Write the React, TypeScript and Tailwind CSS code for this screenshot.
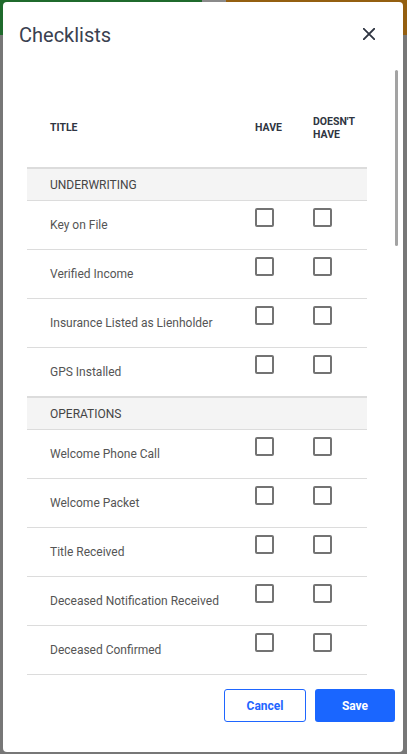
import React from "react";

type Row = { kind: "section"; label: string } | { kind: "item"; label: string };

const rows: Row[] = [
  { kind: "section", label: "UNDERWRITING" },
  { kind: "item", label: "Key on File" },
  { kind: "item", label: "Verified Income" },
  { kind: "item", label: "Insurance Listed as Lienholder" },
  { kind: "item", label: "GPS Installed" },
  { kind: "section", label: "OPERATIONS" },
  { kind: "item", label: "Welcome Phone Call" },
  { kind: "item", label: "Welcome Packet" },
  { kind: "item", label: "Title Received" },
  { kind: "item", label: "Deceased Notification Received" },
  { kind: "item", label: "Deceased Confirmed" },
];

function Box() {
  return <div className="w-[19px] h-[19px] border-2 border-[#737373] rounded-[2px] bg-white" />;
}

export default function App() {
  return (
    <div className="relative w-[407px] h-[754px] bg-[#777777] overflow-hidden font-['Roboto',sans-serif]">
      {/* dimmed background app */}
      <div className="flex h-[35px]">
        <div className="w-[202px] bg-[#1f6a2c]" />
        <div className="w-[24px] bg-[#8a8a8a]" />
        <div className="flex-1 bg-[#945f10]" />
      </div>

      {/* modal */}
      <div className="absolute left-[3px] top-[2px] w-[400px] h-[750px] bg-white rounded-[4px] flex flex-col overflow-hidden">
        <div className="h-[64px] shrink-0 flex items-center justify-between pl-4 pr-[28px]">
          <span className="text-[20px] text-[#3a4150] leading-none pt-[1px]">Checklists</span>
          <svg width="12" height="12" viewBox="0 0 12 12" className="text-[#2f3542]">
            <path d="M0.8 0.8 L11.2 11.2 M11.2 0.8 L0.8 11.2" stroke="currentColor" strokeWidth="1.9" strokeLinecap="square" />
          </svg>
        </div>

        <div className="relative h-[609px] shrink-0 overflow-hidden">
          <div className="absolute right-[5px] top-[4px] w-[3px] h-[176px] rounded-full bg-[#a3a3a3]" />
          <div className="pt-[22px] pl-6 w-[364px]">
            <div className="grid grid-cols-[228px_58px_1fr] h-[80px] items-center border-b border-[#dcdcdc] text-[10.5px] font-bold text-[#2f3542] leading-[13px]">
              <div className="pl-[23px]">TITLE</div>
              <div>HAVE</div>
              <div>
                DOESN'T
                <br />
                HAVE
              </div>
            </div>
            {rows.map((r, i) =>
              r.kind === "section" ? (
                <div
                  key={i}
                  className="h-[33px] flex items-center bg-[#f4f4f4] border-t border-b border-[#dcdcdc] pl-[23px] text-[12px] text-[#454545]"
                >
                  {r.label}
                </div>
              ) : (
                <div
                  key={i}
                  className="grid grid-cols-[228px_58px_1fr] h-[49px] border-b border-[#dcdcdc] text-[12px] text-[#555555]"
                >
                  <div className="pl-[23px] flex items-center">{r.label}</div>
                  <div className="pt-[7px]">
                    <Box />
                  </div>
                  <div className="pt-[7px]">
                    <Box />
                  </div>
                </div>
              )
            )}
          </div>
        </div>

        <div className="flex justify-end gap-[9px] pt-[14px] pr-[8px]">
          <button className="w-[82px] h-[33px] rounded-[3px] border border-[#1f66ff] text-[#1f66ff] text-[12px] font-bold bg-white">
            Cancel
          </button>
          <button className="w-[80px] h-[33px] rounded-[3px] bg-[#1a66ff] text-white text-[12px] font-bold">
            Save
          </button>
        </div>
      </div>
    </div>
  );
}
